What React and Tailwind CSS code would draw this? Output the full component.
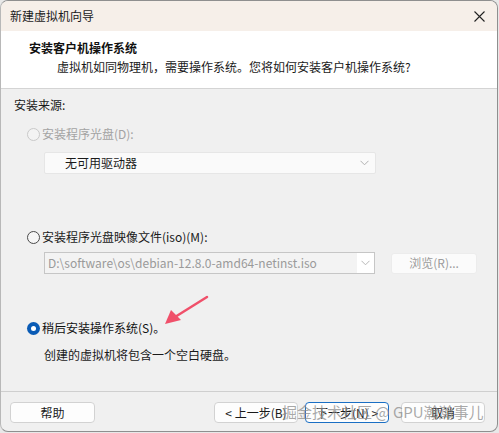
const font = { fontFamily: '"Noto Sans CJK SC", "Microsoft YaHei UI", sans-serif' };

function Radio({ state }) {
  if (state === 'checked') {
    return (
      <span className="w-[13px] h-[13px] rounded-full bg-[#0a5bb5] flex items-center justify-center shrink-0">
        <span className="w-[5px] h-[5px] rounded-full bg-white" />
      </span>
    );
  }
  return (
    <span
      className={`w-[13px] h-[13px] rounded-full border shrink-0 ${
        state === 'disabled' ? 'border-[#c9c9c9] bg-[#f3f3f3]' : 'border-[#4a4a4a] bg-[#f6f6f6]'
      }`}
    />
  );
}

function Chevron({ color = '#b0b0b0' }) {
  return (
    <svg width="9" height="6" viewBox="0 0 9 6" fill="none">
      <path d="M0.5 0.8 L4.5 4.8 L8.5 0.8" stroke={color} strokeWidth="1" />
    </svg>
  );
}

function FooterButton({ children, focused, left }) {
  return (
    <div
      className={`h-[21px] rounded-[4px] flex items-center justify-center text-[12px] bg-[#fdfdfd] ${
        focused ? 'border-[1.5px] border-[#1a6fc4]' : 'border border-[#d2d2d2]'
      } ${left ? 'w-[85px] text-[#1a1a1a]' : 'w-[84px] text-[#1a1a1a]'}`}
    >
      {children}
    </div>
  );
}

export default function App() {
  return (
    <div className="w-[499px] h-[433px] bg-[#e8e8e8] overflow-hidden" style={font}>
      <div className="relative w-[498px] h-[432px] rounded-lg border border-[#8f8f8f] border-l-[#b8b8b8] bg-[#f0f0f0] flex flex-col overflow-hidden">
        {/* title bar */}
        <div className="h-[30px] bg-[#f6efe9] flex items-center justify-between pl-[9px] pr-[12px]">
          <span className="text-[12px] text-[#1a1a1a]">新建虚拟机向导</span>
          <svg width="11" height="11" viewBox="0 0 11 11">
            <path d="M0.5 0.5 L10.5 10.5 M10.5 0.5 L0.5 10.5" stroke="#222" strokeWidth="1.1" />
          </svg>
        </div>

        {/* wizard header */}
        <div className="h-[58px] bg-white border-b border-[#d4d4d4] pl-[28px] pt-[8px]">
          <div className="text-[12px] font-bold text-[#111] leading-[17px]">安装客户机操作系统</div>
          <div className="text-[12px] text-[#1a1a1a] leading-[17px] pl-[28px] mt-[2px]">
            虚拟机如同物理机，需要操作系统。您将如何安装客户机操作系统?
          </div>
        </div>

        {/* body */}
        <div className="flex-1 flex flex-col pl-[13px] pr-[20px] text-[12px] leading-[16px]">
          <div className="mt-[8px] text-[#1a1a1a]">安装来源:</div>

          <div className="mt-[13px] ml-[13px] flex items-center gap-[2px] text-[#a3a3a3]">
            <Radio state="disabled" />
            <span>安装程序光盘(D):</span>
          </div>
          <div className="mt-[10px] ml-[30px] w-[332px] h-[22px] bg-[#fafafa] border border-[#e6e6e6] rounded-[2px] flex items-center justify-between pl-[20px] pr-[6px]">
            <span className="text-[#1a1a1a]">无可用驱动器</span>
            <Chevron />
          </div>

          <div className="mt-[55px] ml-[13px] flex items-center gap-[2px] text-[#1a1a1a]">
            <Radio state="off" />
            <span>安装程序光盘映像文件(iso)(M):</span>
          </div>
          <div className="mt-[7px] ml-[30px] flex items-center">
            <div className="w-[332px] h-[22px] border border-[#c6c6c6] bg-white flex">
              <div className="w-[312px] bg-[#f3f3f3] flex items-center pl-[3px] text-[#9a9a9a] text-[12px]">
                D:\software\os\debian-12.8.0-amd64-netinst.iso
              </div>
              <div className="flex-1 flex items-center justify-center">
                <Chevron color="#b8b8b8" />
              </div>
            </div>
            <div className="ml-[16px] w-[86px] h-[21px] rounded-[3px] border border-[#ececec] bg-[#fbfbfb] flex items-center justify-center text-[#9c9c9c]">
              浏览(R)...
            </div>
          </div>

          <div className="mt-[46px] ml-[13px] flex items-center gap-[2px] text-[#111]">
            <Radio state="checked" />
            <span>稍后安装操作系统(S)。</span>
          </div>
          <div className="mt-[11px] ml-[30px] text-[#1a1a1a]">创建的虚拟机将包含一个空白硬盘。</div>
        </div>

        {/* footer */}
        <div className="h-[40px] border-t border-[#cfcfcf] flex items-start pt-[10px] pl-[9px]">
          <FooterButton left>帮助</FooterButton>
          <div className="ml-[119px] flex gap-[7px]">
            <FooterButton>&lt; 上一步(B)</FooterButton>
            <FooterButton focused>下一步(N) &gt;</FooterButton>
            <div className="ml-[5px]">
              <FooterButton>取消</FooterButton>
            </div>
          </div>
        </div>

        {/* pointer arrow annotation */}
        <svg className="absolute left-[158px] top-[292px]" width="52" height="36" viewBox="0 0 52 36">
          <path d="M48 4 L16 24" stroke="#f0506a" strokeWidth="2.5" strokeLinecap="round" />
          <path d="M6 31 L12 17 L22 27 Z" fill="#f0506a" />
        </svg>

        {/* site watermark */}
        <div className="absolute left-[281px] top-[401px] text-[15px] leading-[20px] text-[#8c8c8c]/75 whitespace-nowrap">
          掘金技术社区 @ GPU瀚瀚事儿
        </div>
      </div>
    </div>
  );
}
